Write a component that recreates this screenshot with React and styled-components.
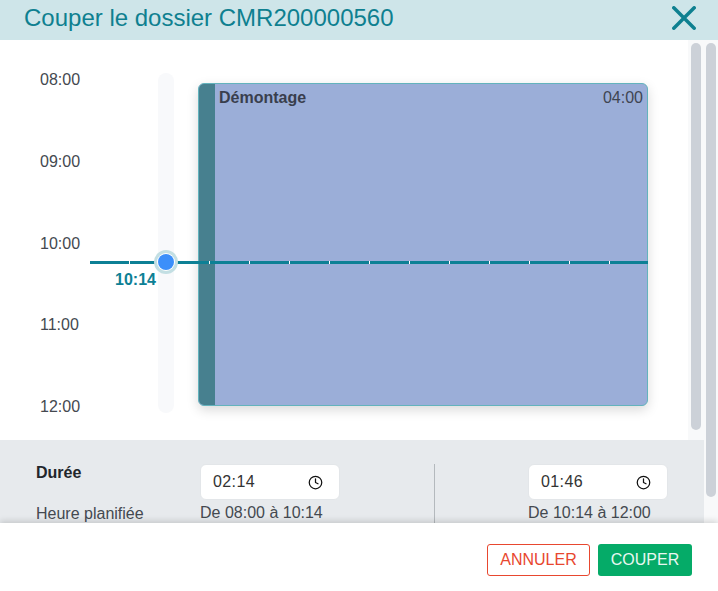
import React from "react";
import styled, { createGlobalStyle } from "styled-components";
import { Clock } from "lucide-react";

const GlobalStyle = createGlobalStyle`
  html, body {
    margin: 0;
    padding: 0;
    overflow: hidden;
    background: #fff;
  }
  * {
    box-sizing: border-box;
  }
`;

const HOURS = ["08:00", "09:00", "10:00", "11:00", "12:00"];

const App = () => {
  return (
    <Modal>
      <GlobalStyle />
      <Header>
        <Title>Couper le dossier CMR200000560</Title>
        <CloseIcon viewBox="0 0 24 24">
          <path d="M1.8 1.8 L22.2 22.2 M22.2 1.8 L1.8 22.2" />
        </CloseIcon>
      </Header>
      <Main>
        <Content>
          <Scheduler>
            <Timeline>
              <Hours>
                {HOURS.map((hour) => (
                  <Hour key={hour}>{hour}</Hour>
                ))}
              </Hours>
              <Track />
              <Event>
                <EventStrip />
                <EventName>Démontage</EventName>
                <EventTime>04:00</EventTime>
              </Event>
              <CutLine />
              <CutHandle />
              <CutLabel>10:14</CutLabel>
            </Timeline>
            <ScrollTrack $width={16} $bottom={10}>
              <ScrollThumb />
            </ScrollTrack>
          </Scheduler>
          <Summary>
            <LabelColumn>
              <Strong>Durée</Strong>
              <Label>Heure planifiée</Label>
            </LabelColumn>
            <LeftPart>
              <TimeInput>
                02:14
                <Clock size={15} strokeWidth={2} color="#111" />
              </TimeInput>
              <Label>De 08:00 à 10:14</Label>
            </LeftPart>
            <RightPart>
              <TimeInput>
                01:46
                <Clock size={15} strokeWidth={2} color="#111" />
              </TimeInput>
              <Label>De 10:14 à 12:00</Label>
            </RightPart>
          </Summary>
        </Content>
        <ScrollTrack $width={14} $bottom={26}>
          <ScrollThumb />
        </ScrollTrack>
      </Main>
      <Footer>
        <CancelButton>ANNULER</CancelButton>
        <CutButton>COUPER</CutButton>
      </Footer>
    </Modal>
  );
};

export default App;

const Modal = styled.div`
  width: 718px;
  height: 591px;
  display: flex;
  flex-direction: column;
  overflow: hidden;
  font-family: "Liberation Sans", Arial, sans-serif;
  font-size: 16px;
  color: #444950;
`;

const Header = styled.div`
  height: 40px;
  flex: none;
  display: flex;
  align-items: center;
  justify-content: space-between;
  padding: 0 22px 4px 24px;
  background: #cee5e9;
`;

const Title = styled.div`
  font-size: 24px;
  color: #0e8090;
`;

const CloseIcon = styled.svg`
  width: 24px;
  height: 24px;
  fill: none;
  stroke: #0e8090;
  stroke-width: 3.5;
  stroke-linecap: round;
`;

const Main = styled.div`
  flex: 1;
  min-height: 0;
  display: flex;
`;

const Content = styled.div`
  flex: 1;
  min-width: 0;
  display: flex;
  flex-direction: column;
`;

const Scheduler = styled.div`
  height: 400px;
  flex: none;
  display: flex;
`;

const Timeline = styled.div`
  position: relative;
  flex: 1;
  display: flex;
  padding: 33px 0 0 40px;
`;

const Hours = styled.div`
  width: 118px;
  height: 340.5px;
  margin-top: 0.3px;
  display: flex;
  flex-direction: column;
  justify-content: space-between;
`;

const Hour = styled.div`
  line-height: 14px;
`;

const Track = styled.div`
  width: 16px;
  height: 340px;
  border-radius: 8px;
  background: #f8f9fb;
`;

const Event = styled.div`
  position: relative;
  width: 450px;
  height: 323px;
  margin: 10px 0 0 24px;
  display: flex;
  justify-content: space-between;
  overflow: hidden;
  padding: 5px 4px 0 20px;
  border-radius: 6px;
  border: 1px solid #63b3bd;
  background: #9baed8;
  box-shadow: 0 4px 12px rgba(0, 0, 0, 0.15);
`;

const EventStrip = styled.div`
  position: absolute;
  left: 0;
  top: 0;
  bottom: 0;
  width: 16px;
  background: #47808f;
`;

const EventName = styled.div`
  font-weight: bold;
  color: #393e4d;
`;

const EventTime = styled.div`
  color: #3f4552;
`;

const CutLine = styled.div`
  position: absolute;
  left: 90px;
  top: 221px;
  width: 558px;
  height: 3px;
  background: repeating-linear-gradient(
    to right,
    #0d8095 0,
    #0d8095 39px,
    #fff 39px,
    #fff 40px
  );
`;

const CutHandle = styled.div`
  position: absolute;
  left: 158px;
  top: 214px;
  width: 16px;
  height: 16px;
  border-radius: 50%;
  background: #3b8ffa;
  box-shadow: 0 0 0 1px #fff, 0 0 0 4px #c3dfe3;
`;

const CutLabel = styled.div`
  position: absolute;
  left: 115px;
  top: 231px;
  font-weight: bold;
  color: #0d8095;
`;

const ScrollTrack = styled.div`
  width: ${(p) => p.$width}px;
  flex: none;
  display: flex;
  justify-content: center;
  padding: 3px 0 ${(p) => p.$bottom}px;
  background: #f8f9fa;
`;

const ScrollThumb = styled.div`
  width: 10px;
  height: 100%;
  border-radius: 5px;
  background: #ccd1d8;
`;

const Summary = styled.div`
  flex: 1;
  min-height: 0;
  display: flex;
  overflow: hidden;
  padding: 24px 0 0 36px;
  background: #e7eaed;
`;

const LabelColumn = styled.div`
  width: 164px;
  display: flex;
  flex-direction: column;
`;

const Strong = styled.div`
  height: 41px;
  font-weight: bold;
  color: #22262b;
`;

const Label = styled.div`
  white-space: nowrap;
  line-height: 18px;
`;

const LeftPart = styled.div`
  width: 235px;
  display: flex;
  flex-direction: column;
  gap: 4px;
  border-right: 1px solid #b4b9bd;
  margin-bottom: -20px;
`;

const RightPart = styled.div`
  margin-left: 93px;
  display: flex;
  flex-direction: column;
  gap: 4px;
`;

const TimeInput = styled.div`
  width: 140px;
  height: 36px;
  flex: none;
  display: flex;
  align-items: center;
  justify-content: space-between;
  padding: 0 16px 0 12px;
  background: #fff;
  border: 1px solid #e3e6e9;
  border-radius: 6px;
  color: #333;
  letter-spacing: 0.4px;
`;

const Footer = styled.div`
  position: relative;
  height: 68px;
  flex: none;
  display: flex;
  align-items: flex-start;
  justify-content: flex-end;
  gap: 8px;
  padding: 21px 26px 0 0;
  background: #fff;
  box-shadow: 0 -2px 6px rgba(0, 0, 0, 0.15);
`;

const CancelButton = styled.button`
  width: 103px;
  height: 32px;
  padding: 0;
  font-family: inherit;
  font-size: 16px;
  color: #e8472f;
  background: #fff;
  border: 1px solid #e8472f;
  border-radius: 3px;
`;

const CutButton = styled.button`
  width: 94px;
  height: 32px;
  padding: 0;
  font-family: inherit;
  font-size: 16px;
  color: #e9f7f1;
  background: #05ab68;
  border: none;
  border-radius: 3px;
`;
